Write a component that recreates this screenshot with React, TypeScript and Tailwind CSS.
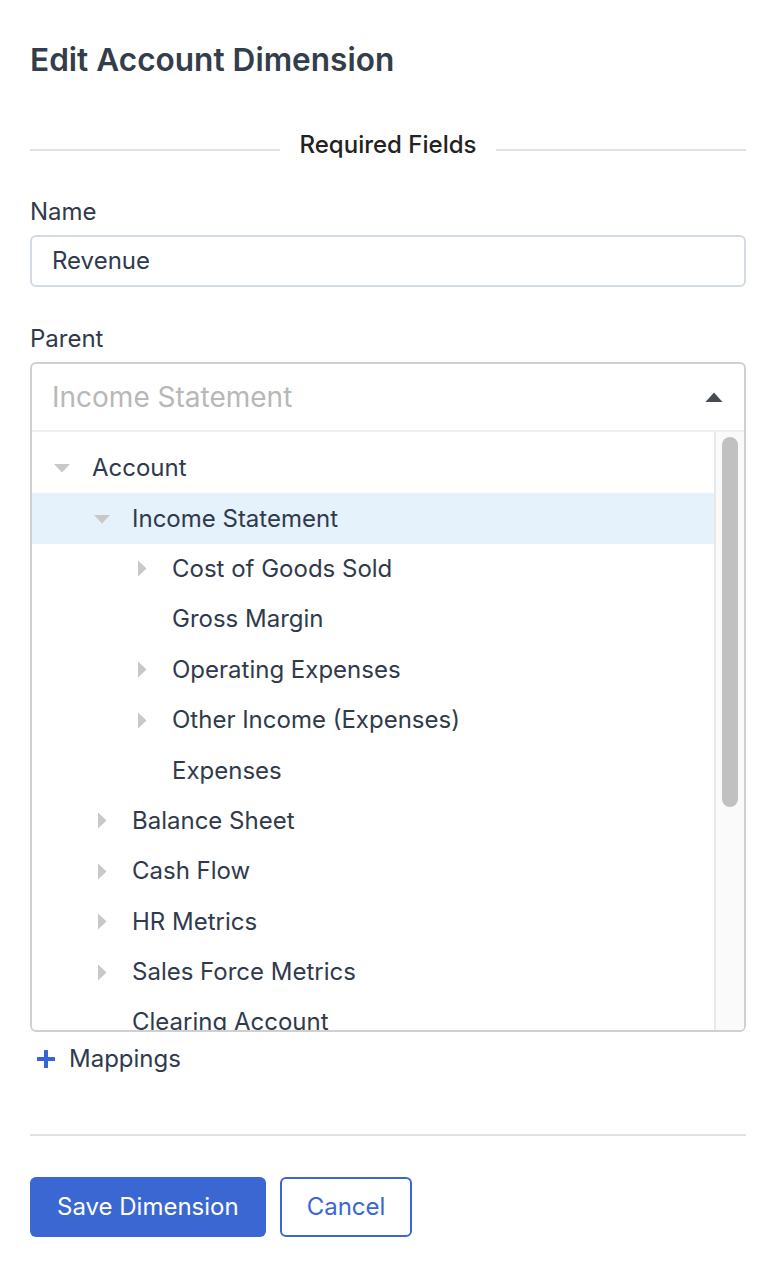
type Node = { label: string; level: number; caret?: 'down' | 'right'; active?: boolean }

const tree: Node[] = [
  { label: 'Account', level: 0, caret: 'down' },
  { label: 'Income Statement', level: 1, caret: 'down', active: true },
  { label: 'Cost of Goods Sold', level: 2, caret: 'right' },
  { label: 'Gross Margin', level: 2 },
  { label: 'Operating Expenses', level: 2, caret: 'right' },
  { label: 'Other Income (Expenses)', level: 2, caret: 'right' },
  { label: 'Expenses', level: 2 },
  { label: 'Balance Sheet', level: 1, caret: 'right' },
  { label: 'Cash Flow', level: 1, caret: 'right' },
  { label: 'HR Metrics', level: 1, caret: 'right' },
  { label: 'Sales Force Metrics', level: 1, caret: 'right' },
  { label: 'Clearing Account', level: 1 },
]

const indent = ['pl-[21px]', 'pl-[61px]', 'pl-[101px]']

function Caret({ dir }: { dir?: 'down' | 'right' }) {
  return (
    <span className="flex h-[18px] w-[18px] shrink-0 items-center justify-center">
      {dir === 'down' ? (
        <svg width="18" height="10" viewBox="0 0 18 10">
          <path d="M1 1h16L9 9.5z" fill="#c8c8c8" />
        </svg>
      ) : dir === 'right' ? (
        <svg width="10" height="17" viewBox="0 0 10 17">
          <path d="M1 0.5v16l8.5-8z" fill="#c8c8c8" />
        </svg>
      ) : null}
    </span>
  )
}

function TreeRow({ node }: { node: Node }) {
  return (
    <div
      className={`flex h-[50.4px] shrink-0 items-center gap-[21px] ${indent[node.level]} ${
        node.active ? 'bg-[#e5f1fb]' : ''
      }`}
    >
      <Caret dir={node.caret} />
      <span className="whitespace-nowrap text-[24px] leading-[30px] text-[#2f3a4c]">{node.label}</span>
    </div>
  )
}

export default function App() {
  return (
    <div className="min-h-[1270px] w-[768px] bg-white pl-[30px] pr-[22px] pt-[38px] font-['Inter',sans-serif] text-[#2f3a4c]">
      <h1 className="text-[31.6px] font-semibold leading-[44px] text-[#333d4b]">Edit Account Dimension</h1>

      <div className="mt-[48px] flex h-[40px] items-center gap-5">
        <div className="h-[2px] flex-1 bg-[#e2e2e2]" />
        <span className="pb-[10px] text-[24px] font-medium leading-[30px] text-[#222]">Required Fields</span>
        <div className="h-[2px] flex-1 bg-[#e2e2e2]" />
      </div>

      <label className="mt-[27px] block text-[24px] leading-[30px]">Name</label>
      <div className="mt-[8px] flex h-[52px] items-center rounded-[6px] border-2 border-[#d4dae3] px-[20px]">
        <span className="text-[24px] leading-[30px]">Revenue</span>
      </div>

      <label className="mt-[37px] block text-[24px] leading-[30px]">Parent</label>
      <div className="mt-[8px] overflow-hidden rounded-[6px] border-2 border-[#d0d0d0]">
        <div className="flex h-[68px] items-center justify-between border-b-2 border-[#eeeeee] pl-[20px] pr-[21px]">
          <span className="text-[28px] leading-[34px] text-[#b8b8b8]">Income Statement</span>
          <svg width="18" height="10" viewBox="0 0 18 10">
            <path d="M9 0.5l8.5 9.5H0.5z" fill="#474c54" />
          </svg>
        </div>
        <div className="flex h-[598px]">
          <div className="flex flex-1 flex-col overflow-hidden pt-[11px]">
            {tree.map((n) => (
              <TreeRow key={n.label} node={n} />
            ))}
          </div>
          <div className="w-[30px] border-l-2 border-[#e8e8e8] bg-[#fafafa] px-[6px] pt-[5px]">
            <div className="h-[370px] rounded-full bg-[#c1c1c1]" />
          </div>
        </div>
      </div>

      <div className="mt-[12px] flex items-center gap-[14px] pl-[7px]">
        <svg width="18" height="18" viewBox="0 0 18 18">
          <rect x="7" y="0" width="4" height="18" rx="0.5" fill="#3566d6" />
          <rect x="0" y="7" width="18" height="4" rx="0.5" fill="#3566d6" />
        </svg>
        <span className="text-[24px] leading-[30px]">Mappings</span>
      </div>

      <div className="mt-[60px] h-[2px] bg-[#e2e2e2]" />

      <div className="mt-[41px] flex gap-[14px]">
        <button className="h-[60px] rounded-[6px] bg-[#3a67d1] px-[27px] text-[24px] text-white">
          Save Dimension
        </button>
        <button className="h-[60px] rounded-[6px] border-2 border-[#3a67d1] bg-white px-[25px] text-[24px] text-[#3a67d1]">
          Cancel
        </button>
      </div>
    </div>
  )
}
